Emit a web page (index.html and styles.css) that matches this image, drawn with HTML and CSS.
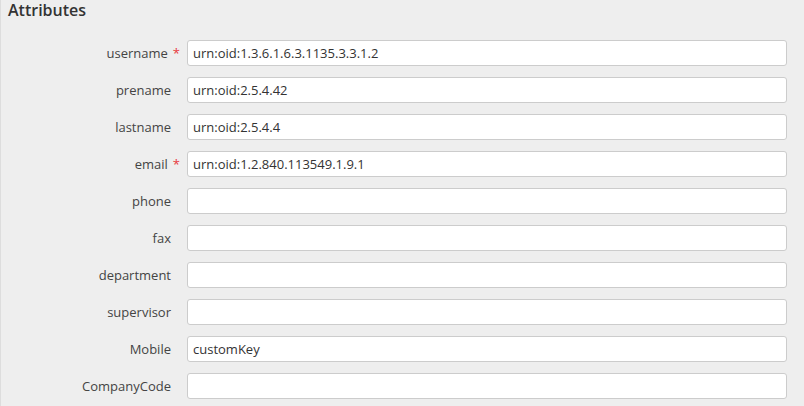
FILE: index.html
```html
<!DOCTYPE html>
<html lang="en">
<head>
    <meta charset="UTF-8">
    <title>Attributes</title>
    <link rel="stylesheet" href="styles.css">
</head>
<body>
    <div class="panel">
        <h3 class="panel-title">Attributes</h3>
        <div class="form">
            <div class="row">
                <label class="label required">username<span class="star">*</span></label>
                <input class="field" type="text" value="urn:oid:1.3.6.1.6.3.1135.3.3.1.2">
            </div>
            <div class="row">
                <label class="label">prename</label>
                <input class="field" type="text" value="urn:oid:2.5.4.42">
            </div>
            <div class="row">
                <label class="label">lastname</label>
                <input class="field" type="text" value="urn:oid:2.5.4.4">
            </div>
            <div class="row">
                <label class="label required">email<span class="star">*</span></label>
                <input class="field" type="text" value="urn:oid:1.2.840.113549.1.9.1">
            </div>
            <div class="row">
                <label class="label">phone</label>
                <input class="field" type="text" value="">
            </div>
            <div class="row">
                <label class="label">fax</label>
                <input class="field" type="text" value="">
            </div>
            <div class="row">
                <label class="label">department</label>
                <input class="field" type="text" value="">
            </div>
            <div class="row">
                <label class="label">supervisor</label>
                <input class="field" type="text" value="">
            </div>
            <div class="row">
                <label class="label">Mobile</label>
                <input class="field" type="text" value="customKey">
            </div>
            <div class="row">
                <label class="label">CompanyCode</label>
                <input class="field" type="text" value="">
            </div>
        </div>
    </div>
</body>
</html>
```

FILE: styles.css
```css
body {
    margin: 0;
    background-color: #eeeeee;
    font-family: "Open Sans", "Liberation Sans", sans-serif;
    font-size: 13px;
    color: #333333;
}
.panel {
    border-left: 1px solid #dddddd;
    height: 406px;
    box-sizing: border-box;
}
.panel-title {
    margin: 0;
    padding: 0 0 0 7px;
    font-size: 16px;
    font-weight: 600;
    line-height: 20px;
    color: #333333;
}
.form {
    display: flex;
    flex-direction: column;
    gap: 11px;
    padding-top: 20px;
}
.row {
    display: flex;
    align-items: center;
}
.label {
    width: 186px;
    box-sizing: border-box;
    padding-right: 16px;
    text-align: right;
    color: #444444;
}
.star {
    display: inline-block;
    margin-left: 5px;
    margin-right: -9px;
    color: #e8383d;
}
.field {
    width: 600px;
    height: 26px;
    box-sizing: border-box;
    border: 1px solid #cccccc;
    border-radius: 3px;
    background-color: #ffffff;
    padding: 0 5px;
    font-family: "Open Sans", "Liberation Sans", sans-serif;
    font-size: 13px;
    color: #333333;
}
```
